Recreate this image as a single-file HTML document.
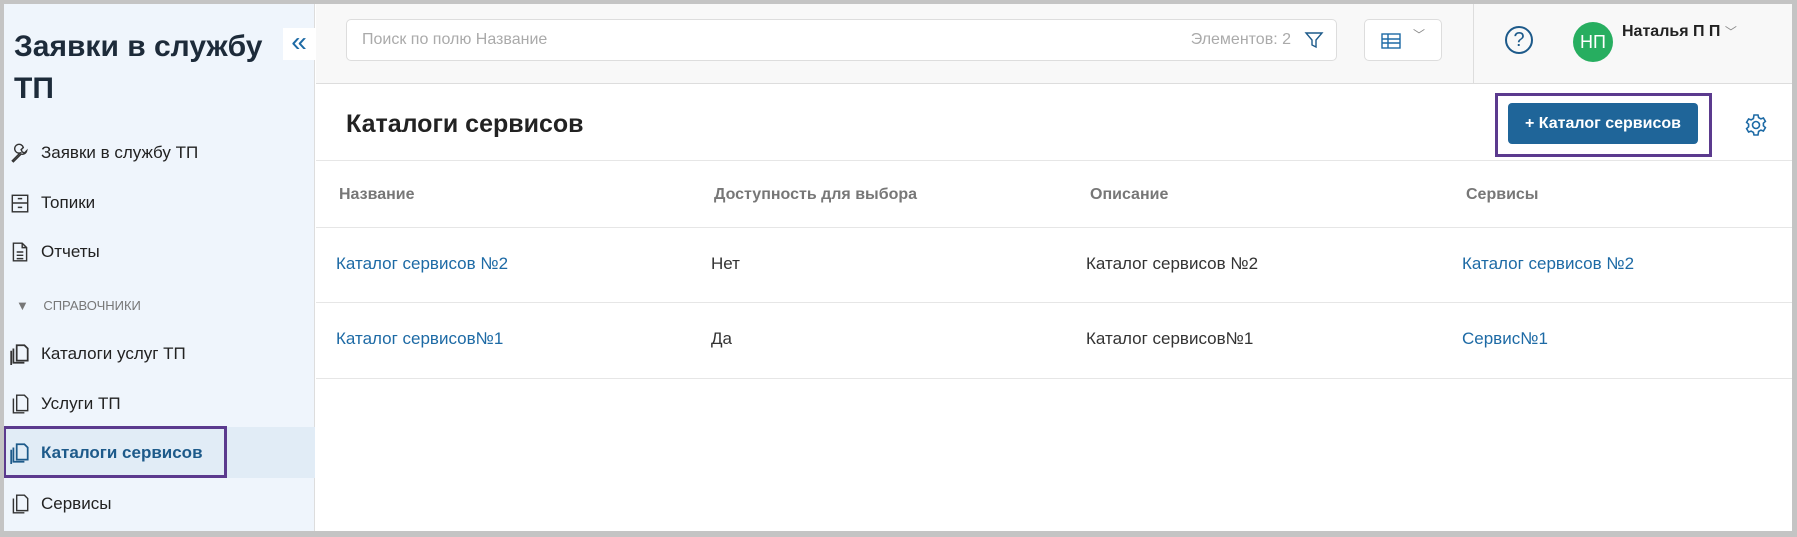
<!DOCTYPE html>
<html><head><meta charset="utf-8"><style>
*{box-sizing:border-box;margin:0;padding:0}
body{width:1797px;height:537px;background:#c4c4c4;font-family:"Liberation Sans",sans-serif;position:relative;overflow:hidden}
.frame{position:absolute;left:4px;top:4px;width:1788px;height:527px;background:#fff;overflow:hidden}
.side{position:absolute;left:0;top:0;width:311px;height:100%;background:#eff5fc;border-right:1px solid #ddd}
.abs{position:absolute}
.title{left:10px;top:22px;font-size:30px;font-weight:bold;color:#1d2b3a;line-height:42px}
.nav{left:5px;font-size:17px;color:#222;display:flex;align-items:center;gap:10px}
.nav svg{width:22px;height:22px}
.top{position:absolute;left:312px;top:0;right:0;height:80px;background:#f8f8f8;border-bottom:1px solid #ddd}
.th{font-size:16px;color:#777;font-weight:bold;top:182px}
.td{font-size:17px;color:#333}
.lk{color:#1d6aa5}
.hr{position:absolute;left:312px;right:0;height:1px;background:#e6e6e6}
</style></head><body>
<div class="frame">
<div class="side">
<div class="abs title">Заявки в службу<br>ТП</div>
<div class="abs" style="left:279px;top:24px;width:32px;height:32px;background:#fff;color:#1d6aa5;font-size:28px;text-align:center;line-height:28px">«</div>
<div class="abs nav" style="top:138px"><svg viewBox="0 0 20 20" fill="none" stroke="#333" stroke-width="1.3"><path d="M3 17l7-7a4 4 0 1 1 3-5l-2 2 1 2 2 1 2-2a4 4 0 0 1-5 3l-7 7z"/></svg>Заявки в службу ТП</div>
<div class="abs nav" style="top:188px"><svg viewBox="0 0 20 20" fill="none" stroke="#333" stroke-width="1.3"><rect x="3" y="3" width="14" height="15"/><path d="M3 10h14M8 6h4M8 14h4"/></svg>Топики</div>
<div class="abs nav" style="top:237px"><svg viewBox="0 0 20 20" fill="none" stroke="#333" stroke-width="1.3"><path d="M4 2h8l4 4v12H4zM12 2v4h4M7 10h6M7 13h6M7 16h6"/></svg>Отчеты</div>
<div class="abs" style="left:12px;top:294px;font-size:13px;color:#777">▼&nbsp;&nbsp;&nbsp;&nbsp;СПРАВОЧНИКИ</div>
<div class="abs nav" style="top:339px"><svg viewBox="0 0 20 20" fill="none" stroke="#333" stroke-width="1.6"><path d="M7 2h7l3 3v11H7zM4 5v13h10M2 7v13"/></svg>Каталоги услуг ТП</div>
<div class="abs nav" style="top:389px"><svg viewBox="0 0 20 20" fill="none" stroke="#333" stroke-width="1.3"><path d="M7 2h7l3 3v11H7zM4 5v13h10"/></svg>Услуги ТП</div>
<div class="abs" style="left:0;top:423px;width:311px;height:51px;background:#e1ecf6"></div>
<div class="abs" style="left:-1px;top:422px;width:224px;height:52px;border:3px solid #5b3a8e"></div>
<div class="abs nav" style="top:438px;color:#1d5a8a;font-weight:bold"><svg viewBox="0 0 20 20" fill="none" stroke="#1d5a8a" stroke-width="1.6"><path d="M7 2h7l3 3v11H7zM4 5v13h10M2 7v13"/></svg>Каталоги сервисов</div>
<div class="abs nav" style="top:489px"><svg viewBox="0 0 20 20" fill="none" stroke="#333" stroke-width="1.3"><path d="M7 2h7l3 3v11H7zM4 5v13h10"/></svg>Сервисы</div>
</div>
<div class="top">
<div class="abs" style="left:30px;top:15px;width:991px;height:42px;background:#fff;border:1px solid #ddd;border-radius:5px;font-size:16px;color:#aaa;line-height:40px;padding-left:15px">Поиск по полю Название<span style="position:absolute;right:45px">Элементов: 2</span><svg class="abs" style="right:12px;top:10px" width="20" height="20" viewBox="0 0 20 20" fill="none" stroke="#1d5a8a" stroke-width="1.4"><path d="M2 3h16l-6 7v7l-4-2v-5z"/></svg></div>
<div class="abs" style="left:1048px;top:15px;width:78px;height:42px;background:#fff;border:1px solid #ddd;border-radius:5px"><svg class="abs" style="left:16px;top:12px" width="20" height="18" viewBox="0 0 20 18" fill="none" stroke="#1d6aa5" stroke-width="1.4"><rect x="1" y="2" width="18" height="14"/><path d="M1 7h18M1 11h18M7 2v14"/></svg><span class="abs" style="left:48px;top:6px;color:#888;font-size:12px">﹀</span></div>
<div class="abs" style="left:1157px;top:0;width:1px;height:80px;background:#ddd"></div>
<div class="abs" style="left:1189px;top:22px;width:28px;height:28px;border:2px solid #1d5a8a;border-radius:50%;text-align:center;font-size:20px;line-height:25px;color:#1d5a8a">?</div>
<div class="abs" style="left:1257px;top:18px;width:40px;height:40px;border-radius:50%;background:#27ae60;color:#fff;font-size:18px;text-align:center;line-height:40px">НП</div>
<div class="abs" style="left:1306px;top:19px;font-size:16px;font-weight:bold;color:#222">Наталья П П <span style="color:#888;font-weight:normal;font-size:12px">﹀</span></div>
</div>
<div class="abs" style="left:342px;top:106px;font-size:25px;font-weight:bold;color:#222">Каталоги сервисов</div>
<div class="abs" style="left:1491px;top:89px;width:217px;height:64px;border:3px solid #5b3a8e"></div>
<div class="abs" style="left:1504px;top:99px;width:190px;height:41px;background:#1f6599;border-radius:4px;color:#fff;font-size:16px;font-weight:bold;text-align:center;line-height:41px">+ Каталог сервисов</div>
<svg class="abs" style="left:1740px;top:109px" width="24" height="24" viewBox="0 0 24 24" fill="none" stroke="#1d6aa5" stroke-width="1.6"><circle cx="12" cy="12" r="3.5"/><path d="M10 2h4l.6 2.6 2.3 1.3 2.5-.9 2 3.4-2 1.8v2.6l2 1.8-2 3.4-2.5-.9-2.3 1.3L14 22h-4l-.6-2.6-2.3-1.3-2.5.9-2-3.4 2-1.8v-2.6l-2-1.8 2-3.4 2.5.9 2.3-1.3z"/></svg>
<div class="hr" style="top:156px"></div>
<div class="abs th" style="left:335px">Название</div>
<div class="abs th" style="left:710px">Доступность для выбора</div>
<div class="abs th" style="left:1086px">Описание</div>
<div class="abs th" style="left:1462px">Сервисы</div>
<div class="hr" style="top:223px"></div>
<div class="abs td lk" style="left:332px;top:250px">Каталог сервисов №2</div>
<div class="abs td" style="left:707px;top:250px">Нет</div>
<div class="abs td" style="left:1082px;top:250px">Каталог сервисов №2</div>
<div class="abs td lk" style="left:1458px;top:250px">Каталог сервисов №2</div>
<div class="hr" style="top:298px"></div>
<div class="abs td lk" style="left:332px;top:325px">Каталог сервисов№1</div>
<div class="abs td" style="left:707px;top:325px">Да</div>
<div class="abs td" style="left:1082px;top:325px">Каталог сервисов№1</div>
<div class="abs td lk" style="left:1458px;top:325px">Сервис№1</div>
<div class="hr" style="top:374px"></div>
</div>
</body></html>
